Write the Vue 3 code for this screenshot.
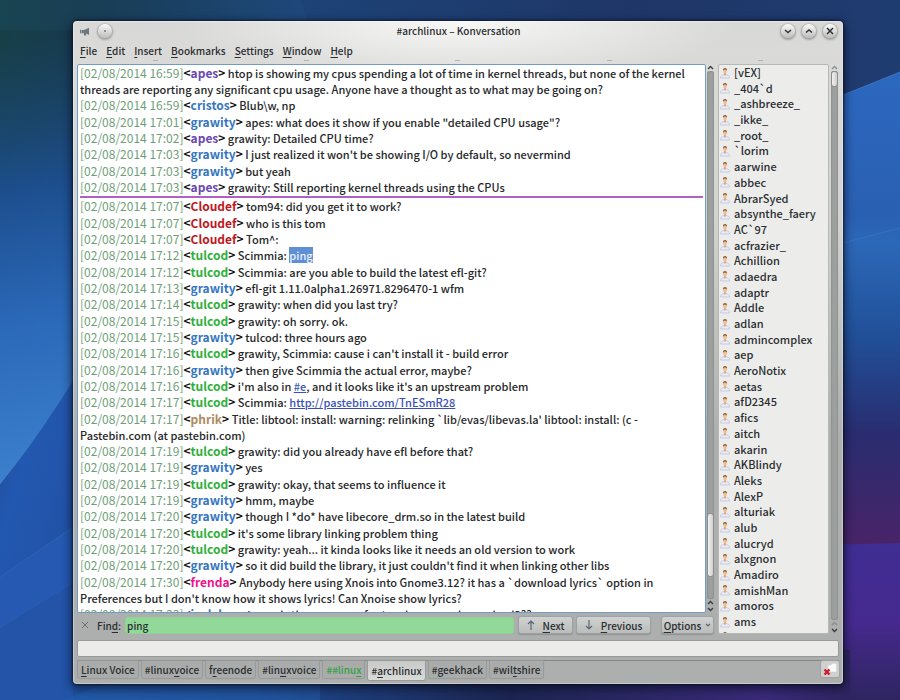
<script setup>
import { ref } from 'vue'

const menus = [
  ['F', 'ile'],
  ['E', 'dit'],
  ['I', 'nsert'],
  ['B', 'ookmarks'],
  ['S', 'ettings'],
  ['W', 'indow'],
  ['H', 'elp'],
]

const tabs = [
  { label: ['', 'L', 'inux Voice'] },
  { label: ['#linux', 'v', 'oice'] },
  { label: ['f', 'r', 'eenode'] },
  { label: ['#lin', 'u', 'xvoice'] },
  { label: ['##linu', 'x', ''], unread: true },
  { label: ['#', 'a', 'rchlinux'], active: true },
  { label: ['#geekhack', '', ''] },
  { label: ['#wil', 't', 'shire'] },
]

const m = (time, nick, text, extra = {}) => ({ time, nick, text, ...extra })

const log = [
  m('16:59', 'apes', 'htop is showing my cpus spending a lot of time in kernel threads, but none of the kernel threads are reporting any significant cpu usage. Anyone have a thought as to what may be going on?'),
  m('16:59', 'cristos', 'Blub\\w, np'),
  m('17:01', 'grawity', 'apes: what does it show if you enable "detailed CPU usage"?'),
  m('17:02', 'apes', 'grawity: Detailed CPU time?'),
  m('17:03', 'grawity', "I just realized it won't be showing I/O by default, so nevermind"),
  m('17:03', 'grawity', 'but yeah'),
  m('17:03', 'apes', 'grawity: Still reporting kernel threads using the CPUs', { last: true }),
  m('17:07', 'Cloudef', 'tom94: did you get it to work?'),
  m('17:07', 'Cloudef', 'who is this tom'),
  m('17:07', 'Cloudef', 'Tom^:'),
  m('17:12', 'tulcod', 'Scimmia: ', { mark: 'ping' }),
  m('17:12', 'tulcod', 'Scimmia: are you able to build the latest efl-git?'),
  m('17:13', 'grawity', 'efl-git 1.11.0alpha1.26971.8296470-1 wfm'),
  m('17:14', 'tulcod', 'grawity: when did you last try?'),
  m('17:15', 'tulcod', 'grawity: oh sorry. ok.'),
  m('17:15', 'grawity', 'tulcod: three hours ago'),
  m('17:16', 'tulcod', "grawity, Scimmia: cause i can't install it - build error"),
  m('17:16', 'grawity', 'then give Scimmia the actual error, maybe?'),
  m('17:16', 'tulcod', "i'm also in ", { link: '#e', after: ", and it looks like it's an upstream problem" }),
  m('17:17', 'tulcod', 'Scimmia: ', { link: 'http://pastebin.com/TnESmR28' }),
  m('17:17', 'phrik', "Title: libtool: install: warning: relinking `lib/evas/libevas.la' libtool: install: (c - Pastebin.com (at pastebin.com)"),
  m('17:19', 'tulcod', 'grawity: did you already have efl before that?'),
  m('17:19', 'grawity', 'yes'),
  m('17:19', 'tulcod', 'grawity: okay, that seems to influence it'),
  m('17:19', 'grawity', 'hmm, maybe'),
  m('17:20', 'grawity', 'though I *do* have libecore_drm.so in the latest build'),
  m('17:20', 'tulcod', "it's some library linking problem thing"),
  m('17:20', 'tulcod', 'grawity: yeah... it kinda looks like it needs an old version to work'),
  m('17:20', 'grawity', "so it did build the library, it just couldn't find it when linking other libs"),
  m('17:30', 'frenda', "Anybody here using Xnois into Gnome3.12? it has a `download lyrics` option in Preferences but I don't know how it shows lyrics! Can Xnoise show lyrics?"),
  m('17:33', 'jack-bean', 'um, is there any use for touchscreen when using i3??'),
]

const nicks = [
  '[vEX]', '_404`d', '_ashbreeze_', '_ikke_', '_root_', '`lorim', 'aarwine', 'abbec', 'AbrarSyed',
  'absynthe_faery', 'AC`97', 'acfrazier_', 'Achillion', 'adaedra', 'adaptr', 'Addle', 'adlan',
  'admincomplex', 'aep', 'AeroNotix', 'aetas', 'afD2345', 'afics', 'aitch', 'akarin', 'AKBlindy',
  'Aleks', 'AlexP', 'alturiak', 'alub', 'alucryd', 'alxgnon', 'Amadiro', 'amishMan', 'amoros', 'ams',
  'amstrad',
]

const query = ref('ping')
const message = ref('')
</script>

<template>
  <div class="desktop">
    <svg class="wallpaper" viewBox="0 0 900 700" preserveAspectRatio="none" aria-hidden="true">
      <defs>
        <linearGradient id="top" x1="0" y1="0" x2="1" y2="0">
          <stop offset="0" stop-color="#173f48" />
          <stop offset=".12" stop-color="#17384f" />
          <stop offset=".33" stop-color="#1d4377" />
          <stop offset=".7" stop-color="#1f3668" />
          <stop offset="1" stop-color="#1f3c70" />
        </linearGradient>
        <linearGradient id="beam" x1="0" y1="0" x2="0.05" y2="1">
          <stop offset="0" stop-color="#1b4774" stop-opacity="0" />
          <stop offset=".35" stop-color="#1d4f8f" />
          <stop offset=".65" stop-color="#2b69b9" />
          <stop offset="1" stop-color="#3c80cd" />
        </linearGradient>
        <linearGradient id="fold" x1="0" y1="0" x2="1" y2="1">
          <stop offset="0" stop-color="#1b3f86" />
          <stop offset=".3" stop-color="#2358b0" />
          <stop offset="1" stop-color="#1d4a98" />
        </linearGradient>
        <linearGradient id="right" x1="0" y1="0" x2="0" y2="1">
          <stop offset="0" stop-color="#2c68bf" />
          <stop offset=".3" stop-color="#2a60b2" />
          <stop offset=".36" stop-color="#2c68b8" />
          <stop offset=".56" stop-color="#214f97" />
          <stop offset=".76" stop-color="#292d70" />
          <stop offset="1" stop-color="#4a2368" />
        </linearGradient>
        <linearGradient id="violet" x1="0" y1="0" x2="0" y2="1">
          <stop offset="0" stop-color="#3f2e93" />
          <stop offset=".5" stop-color="#46298e" />
          <stop offset="1" stop-color="#2e2560" />
        </linearGradient>
        <linearGradient id="floor" x1="0" y1="0" x2="1" y2="0">
          <stop offset="0" stop-color="#2054a4" />
          <stop offset=".3" stop-color="#1e4a8f" />
          <stop offset=".6" stop-color="#1c2550" />
          <stop offset=".9" stop-color="#3a2a78" />
          <stop offset="1" stop-color="#2e2560" />
        </linearGradient>
      </defs>
      <path d="M0 0H900V700H0Z" fill="url(#top)" />
      <path d="M300 0Q306 10 308 30H0V0Z" fill="#2a6a94" fill-opacity=".12" />
      <path d="M0 40H120V320Q60 410 0 485Z" fill="url(#beam)" />
      <path d="M0 485Q60 410 120 300V700H0Z" fill="url(#fold)" />
      <path d="M0 577L73 527L120 498V700H0Z" fill="#2559b2" />
      <path d="M0 628L73 583L120 555V700H0Z" fill="#2354a8" />
      <path d="M0 577L73 527M0 628L73 583" stroke="#3f76c4" stroke-opacity=".4" />
      <path d="M780 120L843 95L900 72V546H780Z" fill="url(#right)" />
      <path d="M843 95L900 72" stroke="#4b86d6" stroke-opacity=".6" />
      <path d="M843 243L900 228" stroke="#4b86d6" stroke-opacity=".35" />
      <path d="M780 546L900 543V700H780Z" fill="url(#violet)" />
      <path d="M0 650H850V700H0Z" fill="url(#floor)" />
      <path d="M0 628L73 583V700H0Z" fill="#2354a8" />
      <path d="M64 700L112 680H320V700Z" fill="#2966b4" fill-opacity=".35" />
    </svg>

    <main class="window">
      <header class="titlebar">
        <div class="side">
          <svg class="horn" viewBox="0 0 10 9" aria-hidden="true">
            <path d="M0 3L1 2.500V6.500L0 6ZM1.500 3H4L9 .8V8L6 6.500V8.500H4V6.300H1.500Z" fill="#6c7880" />
          </svg>
          <button class="round" aria-label="On all desktops"><svg viewBox="0 0 14 14"><circle cx="7" cy="7" r="1" fill="#777" /></svg></button>
        </div>
        <h1>#archlinux – Konversation</h1>
        <div class="side end">
          <button class="round" aria-label="Minimize"><svg viewBox="0 0 14 14"><path d="M4 6L7 8.500L10 6" /></svg></button>
          <button class="round" aria-label="Maximize"><svg viewBox="0 0 14 14"><path d="M4 8.500L7 6L10 8.500" /></svg></button>
          <button class="round" aria-label="Close"><svg viewBox="0 0 14 14"><path d="M4 4L10 10M10 4L4 10" /></svg></button>
        </div>
      </header>

      <nav class="menubar">
        <button v-for="p in menus" :key="p[0]"><u>{{ p[0] }}</u>{{ p[1] }}</button>
      </nav>
      <div class="grips"><i v-for="n in 5" :key="n"></i></div>

      <div class="body">
        <section class="channel">
          <div class="logrow">
            <div class="log">
              <ul>
                <li v-for="(l, i) in log" :key="i" :class="{ last: l.last }">
                  <time>[02/08/2014 {{ l.time }}]</time>
                  <b>&lt;<span :class="l.nick">{{ l.nick }}</span>&gt;</b>
                  {{ l.text }}<mark v-if="l.mark">{{ l.mark }}</mark><a v-if="l.link" href="#">{{ l.link }}</a>{{ l.after }}
                </li>
              </ul>
            </div>
            <div class="scroll low">
              <svg viewBox="0 0 9 7"><path d="M2 5L4.500 2.500L7 5" /></svg>
              <div class="track"><div class="thumb"></div></div>
              <svg viewBox="0 0 9 7"><path d="M2 5L4.500 2.500L7 5" /></svg>
              <svg viewBox="0 0 9 7"><path d="M2 2L4.500 4.500L7 2" /></svg>
            </div>
          </div>
          <form class="find" @submit.prevent>
            <button type="button" class="dismiss" aria-label="Close find bar"><svg viewBox="0 0 8 8"><path d="M1 1L7 7M7 1L1 7" /></svg></button>
            <label for="find">Fin<u>d</u>:</label>
            <input id="find" v-model="query" type="text" />
            <button type="button" class="push next"><svg viewBox="0 0 8 10"><path d="M4 10V1M1 4L4 1L7 4" /></svg><span><u>N</u>ext</span></button>
            <button type="button" class="push prev"><svg viewBox="0 0 8 10"><path d="M4 0V9M1 6L4 9L7 6" /></svg><span><u>P</u>revious</span></button>
            <button type="button" class="push options"><span><u>O</u>ptions</span><svg class="caret" viewBox="0 0 6 6"><path d="M1 2L3 4L5 2" /></svg></button>
          </form>
        </section>

        <aside class="people">
          <div class="nicklist">
            <ul>
              <li v-for="n in nicks" :key="n">
                <svg viewBox="0 0 10 12" aria-hidden="true">
                  <path d="M0.500 11Q0.500 7.500 5 7.500Q9.500 7.500 9.500 11Z" fill="#e9ebfa" stroke="#b3b7d2" stroke-width=".6" />
                  <path d="M4 6H6V8L5 9L4 8Z" fill="#e0aa7c" />
                  <ellipse cx="5" cy="4" rx="1.800" ry="2.500" fill="#ecc09a" />
                  <path d="M3 4Q2.600 1 5 1Q7.400 1 7 4Q6.600 2.400 5 2.400Q3.400 2.400 3 4Z" fill="#9a6238" />
                </svg>
                {{ n }}
              </li>
            </ul>
          </div>
          <div class="scroll high">
            <svg class="dim" viewBox="0 0 9 7"><path d="M2 5L4.500 2.500L7 5" /></svg>
            <div class="track"><div class="thumb"></div></div>
            <svg class="dim" viewBox="0 0 9 7"><path d="M2 5L4.500 2.500L7 5" /></svg>
            <svg viewBox="0 0 9 7"><path d="M2 2L4.500 4.500L7 2" /></svg>
          </div>
        </aside>
      </div>

      <input v-model="message" class="message" type="text" aria-label="Message" />

      <footer class="tabs">
        <button v-for="(t, i) in tabs" :key="i" class="tab" :class="{ active: t.active, unread: t.unread }">{{ t.label[0] }}<u>{{ t.label[1] }}</u>{{ t.label[2] }}</button>
        <button class="closetab" aria-label="Close tab">
          <svg viewBox="0 0 16 14">
            <path d="M6 3H9L10 1.500H14.500V10H6Z" fill="#fafafa" stroke="#d2d2d2" stroke-width=".6" />
            <path d="M2.500 7.500L7.500 12.500M7.500 7.500L2.500 12.500" stroke="#d01a2c" stroke-width="2.400" />
          </svg>
        </button>
      </footer>
    </main>
  </div>
</template>

<style>
body { margin: 0; }
</style>

<style scoped>
.desktop {
  position: relative;
  box-sizing: border-box;
  height: 100vh;
  padding: 21px 57px 16px 73px;
  display: flex;
  font-family: "Noto Sans CJK SC", sans-serif;
  font-size: 10px;
  font-weight: 500;
  color: #2b2e31;
  overflow: hidden;
}
.wallpaper {
  position: absolute;
  inset: 0;
  width: 100%;
  height: 100%;
}
button, input {
  font: inherit;
  color: inherit;
  margin: 0;
  padding: 0;
  border: 0;
  background: none;
  box-sizing: border-box;
}
ul { margin: 0; padding: 0; list-style: none; }
svg { display: block; flex: none; fill: none; }
u { text-underline-offset: 2px; }
.window {
  position: relative;
  flex: 1;
  min-width: 0;
  box-sizing: border-box;
  display: flex;
  flex-direction: column;
  padding: 0 4px 3px;
  border-radius: 4px;
  background:
    radial-gradient(ellipse 280px 60px at 50% 0, #f8f8f6, rgba(248, 248, 246, 0)),
    linear-gradient(#d8d9d6, #dadbd8 30px, #d2d3d1 200px, #acafad 420px, #acafad);
  box-shadow: inset 0 0 1px 1px rgba(255, 255, 255, .35), 0 0 2px 1px rgba(10, 15, 30, .6), 0 3px 10px 2px rgba(5, 10, 30, .6);
}
.titlebar {
  height: 20px;
  display: flex;
  align-items: center;
}
.titlebar h1 {
  margin: 0;
  font-size: 10px;
  font-weight: 500;
  line-height: 20px;
}
.side {
  flex: 1;
  display: flex;
  align-items: center;
  gap: 8px;
  padding-left: 3px;
}
.side.end { justify-content: flex-end; gap: 7px; padding: 0 2px 0 0; }
.horn { width: 10px; height: 9px; }
.round {
  width: 14px;
  height: 14px;
  border-radius: 50%;
  background: linear-gradient(#fafafa, #bcbebd);
  box-shadow: 0 0 1px #8b8d8c, 0 1px 2px 1px rgba(0, 0, 0, .25);
}
.round path { stroke: #2f3234; stroke-width: 1.5; }
.menubar {
  display: flex;
  gap: 9px;
  padding-left: 3px;
  height: 19px;
}
.menubar button { line-height: 19px; }
.grips {
  display: flex;
  justify-content: space-around;
  height: 4px;
  padding: 0 3px;
}
.grips i { width: 5px; height: 1px; background: #b3b4b2; }
.body {
  flex: 1;
  min-height: 0;
  display: flex;
  gap: 3px;
}
.channel {
  flex: 1;
  min-width: 0;
  display: flex;
  flex-direction: column;
}
.logrow { flex: 1; min-height: 0; display: flex; }
.log, .nicklist {
  flex: 1;
  min-width: 0;
  display: flex;
  flex-direction: column;
  overflow: hidden;
}
.log {
  background: #fff;
  border: 1px solid #6f9bc4;
  border-radius: 2px;
  padding: 0 2px;
}
.log ul, .nicklist ul {
  flex: 1;
  min-height: 0;
  display: flex;
  flex-direction: column;
  justify-content: space-between;
}
.log ul { margin-bottom: -10px; }
.log li { font-size: 11px; line-height: 16px; color: #26282a; }
.log li.last { border-bottom: 2px solid #b35fc4; padding-bottom: 1px; }
time, .log b { font-size: 12px; }
time { color: #6ea078; font-weight: 400; }
.log b { font-weight: 700; color: #111; }
.apes { color: #6a48b4; }
.cristos, .grawity, .jack-bean { color: #3576c2; }
.Cloudef { color: #c01822; }
.tulcod { color: #2fb03a; }
.phrik { color: #b08a62; }
.frenda { color: #f0128c; }
mark { background: #5f8fd4; color: #e9f0fb; }
a { color: #3a52b8; }
.scroll {
  width: 9px;
  display: flex;
  flex-direction: column;
}
.scroll svg { width: 9px; height: 7px; }
.scroll path { stroke: #3a3d3f; stroke-width: 1.4; }
.scroll .dim path { stroke: #8c8f8e; }
.track {
  flex: 1;
  margin: 0 1px;
  display: flex;
  border-radius: 3px;
  background: #9da09f;
  box-shadow: inset 0 0 2px #6f7271;
}
.thumb {
  flex: 1;
  border: 1px solid #8b8e8d;
  border-radius: 3px;
  background: linear-gradient(90deg, #f0f0ef, #cfd1d0);
}
.low .thumb { height: 62px; align-self: flex-end; margin-bottom: 22px; }
.high .thumb { height: 14px; }
.find {
  box-sizing: border-box;
  display: flex;
  align-items: center;
  height: 21px;
  padding-top: 3px;
}
.dismiss { width: 16px; padding-left: 4px; }
.dismiss svg { width: 8px; height: 8px; }
.dismiss path { stroke: #68707a; }
.find label { padding: 0 4px; }
.find input {
  flex: 1;
  min-width: 0;
  height: 17px;
  padding: 0 2px;
  border-radius: 2px;
  background: #92d898;
  box-shadow: inset 0 0 1px #6fae77;
}
.push {
  display: flex;
  align-items: center;
  justify-content: center;
  gap: 8px;
  height: 16px;
  border-radius: 2px;
  background: linear-gradient(#d0d2d1, #bbbdbc);
  box-shadow: 0 0 1px 1px #a0a3a2, 0 1px 1px 1px #8f9291;
}
.push svg { width: 8px; height: 10px; }
.push path { stroke: #5a6672; stroke-width: 1.2; }
.next { width: 53px; margin-left: 5px; }
.prev { width: 73px; margin-left: 5px; }
.options { width: 51px; margin: 0 2px 0 12px; gap: 4px; }
.options .caret { width: 6px; height: 6px; }
.people { width: 121px; display: flex; }
.nicklist {
  background: #ecedeb;
  border: 1px solid #b6b8b6;
  border-radius: 2px;
}
.nicklist ul { margin-bottom: -12px; }
.nicklist li {
  display: flex;
  align-items: center;
  gap: 4px;
  padding-left: 1px;
  font-size: 11px;
  line-height: 15px;
}
.nicklist li svg { width: 10px; height: 12px; }
.people .scroll { margin-left: 1px; }
.message {
  width: 100%;
  height: 17px;
  margin-top: 6px;
  padding: 0 4px;
  background: #ebecea;
  border: 1px solid #979a99;
  border-radius: 2px;
}
.tabs {
  display: flex;
  align-items: flex-start;
  gap: 4px;
  height: 20px;
  margin-top: 3px;
  padding-left: 1px;
  border-top: 1px solid #848786;
}
.tab {
  height: 17px;
  padding: 0 3px;
  border-radius: 0 0 2px 2px;
  background: #a9acaa;
  box-shadow: 0 0 1px 1px #979a99;
  line-height: 16px;
  white-space: nowrap;
}
.tab.active { height: 19px; background: linear-gradient(#c8cac8, #dadbd9); }
.tab.unread { color: #35a046; }
.closetab {
  margin-left: auto;
  padding: 1px;
  border-radius: 2px;
  background: #cfd1d0;
  box-shadow: 0 0 1px 1px #a0a3a2;
}
.closetab svg { width: 16px; height: 14px; }
</style>
